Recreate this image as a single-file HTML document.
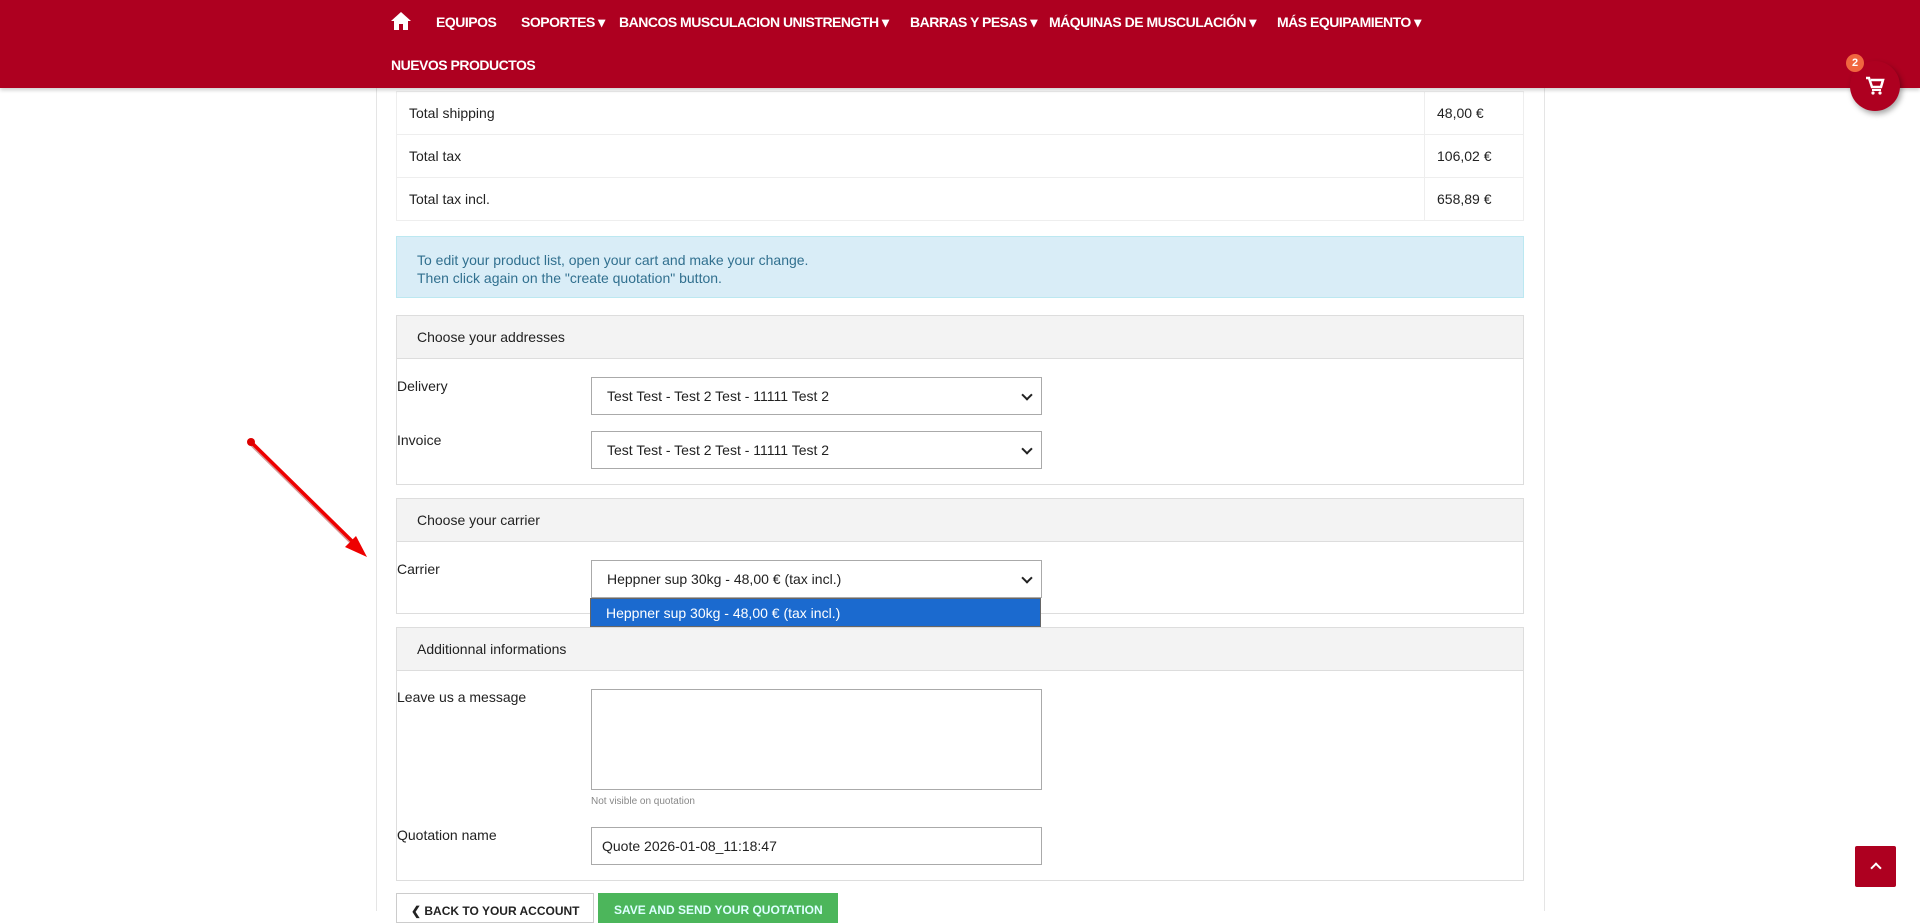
<!DOCTYPE html>
<html><head><meta charset="utf-8"><style>
*{box-sizing:border-box;margin:0;padding:0}
body{width:1920px;height:911px;overflow:hidden;background:#fff;font-family:"Liberation Sans",sans-serif;font-size:14px;color:#222;position:relative}
.hdr{position:absolute;left:0;top:0;width:1920px;height:88px;background:#ae0020;box-shadow:0 2px 4px rgba(0,0,0,.2);z-index:5}
.nav{position:absolute;color:#fff;font-weight:bold;font-size:14px;letter-spacing:-.5px;white-space:nowrap}
.col{position:absolute;left:376px;top:0;width:1169px;height:911px;border-left:1px solid #e5e5e5;border-right:1px solid #e5e5e5}
.abs{position:absolute}
table{position:absolute;left:396px;top:91px;width:1128px;border-collapse:collapse}
td{border:1px solid #eee;height:43px;padding:0 12px;font-size:14px}
.info{left:396px;top:236px;width:1128px;height:62px;background:#d9edf7;border:1px solid #bce8f1;color:#31708f;padding:14px 20px;line-height:18px;font-size:14px}
.panel{left:396px;width:1128px;border:1px solid #ddd}
.ph{background:#f3f3f3;border-bottom:1px solid #ddd;height:43px;line-height:43px;padding-left:20px}
.sel{position:absolute;left:194px;width:451px;height:38px;border:1px solid #aaa;background:#fff;padding:0 15px;line-height:36px;font-size:14px}
.sel:after{content:"";position:absolute;right:10px;top:13px;width:6px;height:6px;border-right:2px solid #222;border-bottom:2px solid #222;transform:rotate(45deg)}
.lbl{position:absolute;left:0}
.btn{position:absolute;top:893px;height:30px;font-weight:bold;font-size:12px;white-space:nowrap;overflow:hidden;padding:10px 0 0 14px}
</style></head><body>
<div class="col"></div>
<table>
<tr><td>Total shipping</td><td style="width:99px">48,00 €</td></tr>
<tr><td>Total tax</td><td>106,02 €</td></tr>
<tr><td>Total tax incl.</td><td>658,89 €</td></tr>
</table>
<div class="hdr">
<svg class="abs" style="left:390px;top:11px" width="22" height="20" viewBox="0 0 22 20"><path d="M11 1L1 10h3v9h5v-6h4v6h5v-9h3z" fill="#fff"/></svg>
<div class="nav" style="left:436px;top:14px">EQUIPOS</div>
<div class="nav" style="left:521px;top:14px">SOPORTES ▾</div>
<div class="nav" style="left:619px;top:14px">BANCOS MUSCULACION UNISTRENGTH ▾</div>
<div class="nav" style="left:910px;top:14px">BARRAS Y PESAS ▾</div>
<div class="nav" style="left:1049px;top:14px">MÁQUINAS DE MUSCULACIÓN ▾</div>
<div class="nav" style="left:1277px;top:14px">MÁS EQUIPAMIENTO ▾</div>
<div class="nav" style="left:391px;top:57px">NUEVOS PRODUCTOS</div>
</div>
<div class="abs" style="left:1850px;top:61px;width:50px;height:50px;border-radius:50%;background:#ae0020;box-shadow:2px 3px 6px rgba(0,0,0,.35);z-index:6">
<svg class="abs" style="left:15px;top:15px" width="20" height="20" viewBox="0 0 20 20"><path d="M1 2h3l3 9h9l2-7H6" fill="none" stroke="#fff" stroke-width="2.5"/><rect x="7" y="13" width="9" height="2" fill="#fff"/><circle cx="8" cy="17" r="1.6" fill="#fff"/><circle cx="15" cy="17" r="1.6" fill="#fff"/></svg></div>
<div class="abs" style="left:1846px;top:54px;width:18px;height:18px;border-radius:50%;background:#f0663f;color:#fff;font-size:11px;font-weight:bold;text-align:center;line-height:18px;z-index:7">2</div>
<div class="abs info">To edit your product list, open your cart and make your change.<br>Then click again on the "create quotation" button.</div>
<div class="abs panel" style="top:315px;height:170px"><div class="ph">Choose your addresses</div>
<div class="lbl" style="top:62px">Delivery</div><div class="sel" style="top:61px">Test Test - Test 2 Test - 11111 Test 2</div>
<div class="lbl" style="top:116px">Invoice</div><div class="sel" style="top:115px">Test Test - Test 2 Test - 11111 Test 2</div></div>
<div class="abs panel" style="top:498px;height:116px"><div class="ph">Choose your carrier</div>
<div class="lbl" style="top:62px">Carrier</div><div class="sel" style="top:61px">Heppner sup 30kg - 48,00 € (tax incl.)</div></div>
<div class="abs panel" style="top:627px;height:254px"><div class="ph">Additionnal informations</div>
<div class="lbl" style="top:61px">Leave us a message</div>
<div class="abs" style="left:194px;top:61px;width:451px;height:101px;border:1px solid #aaa"></div>
<div class="abs" style="left:194px;top:168px;font-size:10px;color:#888">Not visible on quotation</div>
<div class="lbl" style="top:199px">Quotation name</div>
<div class="abs" style="left:194px;top:199px;width:451px;height:38px;border:1px solid #aaa;padding:0 10px;line-height:36px">Quote 2026-01-08_11:18:47</div></div>
<div class="abs" style="left:590px;top:598px;width:451px;height:29px;background:#1b6acf;color:#fff;padding-left:15px;line-height:28px;border:1px solid #666">Heppner sup 30kg - 48,00 € (tax incl.)</div>
<div class="btn" style="left:396px;width:198px;border:1px solid #ccc">❮ BACK TO YOUR ACCOUNT</div>
<div class="btn" style="left:598px;width:240px;background:#4cb65b;color:#dff;padding-left:16px">SAVE AND SEND YOUR QUOTATION</div>
<div class="abs" style="left:1855px;top:846px;width:41px;height:41px;background:#ae0020;border-radius:2px"><div class="abs" style="left:17px;top:18px;width:8px;height:8px;border-left:2px solid #fff;border-top:2px solid #fff;transform:rotate(45deg)"></div></div>
<svg class="abs" style="left:240px;top:432px" width="140" height="140"><line x1="12" y1="12" x2="118" y2="116" stroke="#900" stroke-width="5" opacity=".4"/><line x1="11" y1="10" x2="116" y2="113" stroke="#e00" stroke-width="3.5"/><circle cx="11" cy="10" r="4" fill="#d00"/><polygon points="127,125 105,115 116,104" fill="#e00"/></svg>
</body></html>
